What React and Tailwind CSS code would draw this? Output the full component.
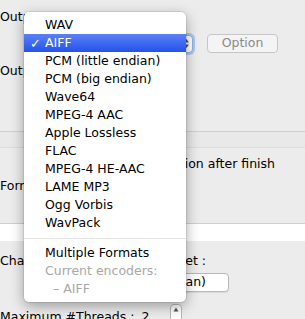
const items = [
  'WAV',
  'AIFF',
  'PCM (little endian)',
  'PCM (big endian)',
  'Wave64',
  'MPEG-4 AAC',
  'Apple Lossless',
  'FLAC',
  'MPEG-4 HE-AAC',
  'LAME MP3',
  'Ogg Vorbis',
  'WavPack',
];

function Arrows() {
  return (
    <svg width="7" height="11" viewBox="0 0 7 11" className="text-gray-600">
      <path d="M3.5 1 L6 4.5 H1 Z" fill="currentColor" />
      <path d="M3.5 10 L6 6.5 H1 Z" fill="currentColor" />
    </svg>
  );
}

function Menu() {
  return (
    <div className="absolute left-[24px] top-[12px] w-[162px] rounded-[5px] bg-white py-[4px] shadow-[0_4px_14px_rgba(0,0,0,0.35),0_0_0_1px_rgba(0,0,0,0.08)]">
      {items.map((label) => {
        const selected = label === 'AIFF';
        return (
          <div
            key={label}
            className={
              selected
                ? 'relative flex h-[18px] items-center bg-gradient-to-b from-[#5b7ff6] to-[#2451ea] pl-[21px] text-white'
                : 'relative flex h-[18px] items-center pl-[21px] text-black'
            }
          >
            {selected && <span className="absolute left-[6px] top-[0px] text-[13px]">✓</span>}
            {label}
          </div>
        );
      })}
      <div className="flex h-[12px] items-center">
        <div className="h-px w-full bg-[#e3e3e3]" />
      </div>
      <div className="flex h-[18px] items-center pl-[21px] text-black">Multiple Formats</div>
      <div className="flex h-[18px] items-center pl-[21px] text-[#a8a8a8]">Current encoders:</div>
      <div className="flex h-[18px] items-center pl-[29px] text-[#a8a8a8]">– AIFF</div>
    </div>
  );
}

export default function App() {
  return (
    <div
      className="relative h-[319px] w-[305px] overflow-hidden bg-[#ececec] text-[12.5px] text-black"
      style={{ fontFamily: '"DejaVu Sans", "Liberation Sans", sans-serif' }}
    >
      <div className="flex flex-col">
        <div className="mt-[8px] flex h-[18px] items-center">Output Format :</div>
        <div className="mt-[8px] flex h-[19px] items-center gap-[14px] pl-[30px]">
          <div className="flex h-[18px] w-[163px] items-center justify-end rounded-[4px] border border-[#8fb1e8] bg-white pr-[2px] shadow-[0_0_0_2px_rgba(110,160,235,0.5)]">
            <Arrows />
          </div>
          <div className="flex h-[19px] w-[71px] items-center justify-center rounded-[4px] border border-[#c6c6c6] bg-[#f4f4f4] text-[#8a8a8a]">
            Option
          </div>
        </div>
        <div className="mt-[9px] flex h-[18px] items-center">Output Folder :</div>
        <div className="mt-[51px] h-px bg-[#cfcfcf]" />
        <div className="h-[15px] bg-[#e9e9e9]" />
        <div className="h-px bg-[#dcdcdc]" />
        <div className="mt-[7px] flex h-[18px] items-center justify-end pr-[30px]">
          Open the destination after finish
        </div>
        <div className="mt-[4px] flex h-[18px] items-center">Format of tag :</div>
        <div className="mt-[28px] h-[18px] border-t border-[#cfcfcf] bg-white" />
        <div className="mt-[11px] flex h-[18px] w-[206px] items-center justify-between">
          <span>Character encoding for tag</span>
          <span>set :</span>
        </div>
        <div className="mt-[3px] flex h-[19px] items-center pl-[60px]">
          <div className="flex h-[19px] w-[169px] items-center justify-end gap-[16px] overflow-hidden rounded-[4px] border border-[#b8b8b8] bg-white pr-[6px] shadow-[0_1px_1px_rgba(0,0,0,0.08)]">
            <span className="whitespace-nowrap">Western (Mac OS Roman)</span>
            <Arrows />
          </div>
        </div>
        <div className="mt-[16px] flex h-[18px] items-center">
          <span>Maximum #Threads :</span>
          <span className="ml-[7px]">2</span>
          <div className="ml-[21px] -mt-[4px] flex h-[20px] w-[12px] items-start justify-center self-start rounded-[4px] border border-[#b8b8b8] bg-white pt-[2px]">
            <svg width="6" height="5" viewBox="0 0 6 5">
              <path d="M3 0.5 L5.5 4.5 H0.5 Z" fill="#555" />
            </svg>
          </div>
        </div>
      </div>
      <Menu />
    </div>
  );
}
